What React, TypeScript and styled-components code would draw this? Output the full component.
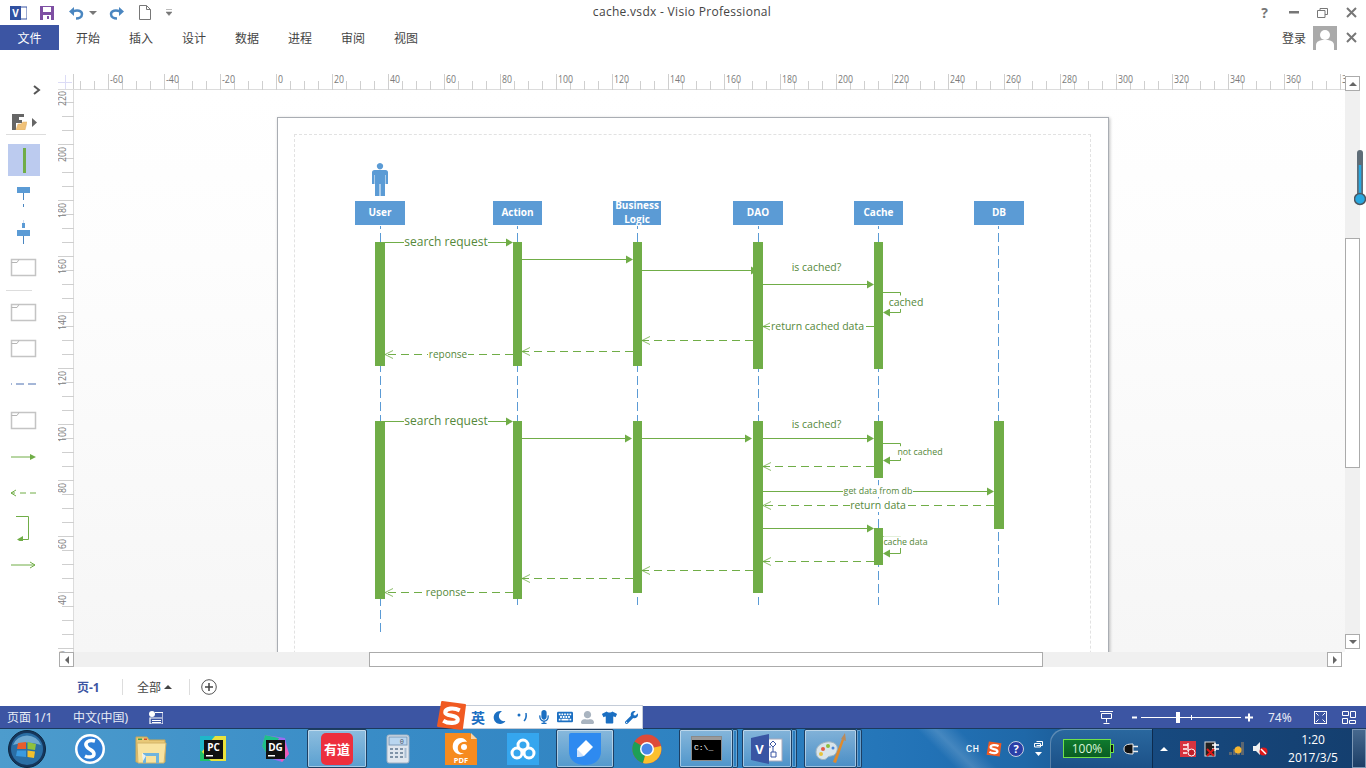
import { Fragment } from "react";
import styled, { createGlobalStyle } from "styled-components";
import { FaKeyboard, FaMicrophone, FaMoon, FaTshirt, FaUserAlt, FaWrench } from "react-icons/fa";

const GlobalStyle = createGlobalStyle`
  html, body { margin: 0; padding: 0; background: #fff; overflow: hidden; }
  * { box-sizing: border-box; }
  body { font-family: "Open Sans", "Noto Sans CJK SC", sans-serif; }
`;

const CJK = `"Noto Sans", "Noto Sans CJK SC", sans-serif`;
const BLUE = "#3c55a3";
const GREEN = "#70ad47";
const TEXT_GREEN = "#55883a";
const HEAD_BLUE = "#5b9bd5";

const Screen = styled.div`
  position: relative;
  width: 1366px;
  height: 768px;
  overflow: hidden;
  display: flex;
  flex-direction: column;
  background: #fff;
`;

/* ---------- title bar and ribbon ---------- */
const TitleBar = styled.div`
  height: 25px;
  display: grid;
  grid-template-columns: 1fr auto 1fr;
  align-items: center;
`;
const QuickAccess = styled.div`
  display: flex;
  align-items: center;
  padding-left: 10px;
`;
const QatSlot = styled.span<{ $w: number }>`
  width: ${(p) => p.$w}px;
  height: 20px;
  display: flex;
  align-items: center;
`;
const Title = styled.div`
  font-size: 12px;
  color: #444;
  letter-spacing: 0.3px;
  padding-right: 2px;
  padding-bottom: 2px;
`;
const WindowControls = styled.div`
  display: flex;
  justify-content: flex-end;
  align-items: center;
`;
const ControlSlot = styled.span`
  width: 29px;
  height: 20px;
  display: flex;
  justify-content: center;
  align-items: center;
  color: #777;
  font: 700 14px "Open Sans", sans-serif;
`;
const RibbonTabs = styled.div`
  height: 25px;
  display: flex;
  align-items: center;
`;
const FileTab = styled.div`
  width: 59px;
  height: 25px;
  background: ${BLUE};
  color: #fff;
  font: 12px ${CJK};
  display: flex;
  align-items: center;
  justify-content: center;
`;
const TabList = styled.div`
  display: flex;
  gap: 29px;
  margin-left: 17px;
`;
const Tab = styled.span`
  font: 12px ${CJK};
  color: #444;
`;
const Account = styled.div`
  margin-left: auto;
  display: flex;
  align-items: center;
`;
const LoginText = styled.span`
  font: 12px ${CJK};
  color: #444;
  margin-right: 7px;
`;
const Avatar = styled.div`
  width: 24px;
  height: 24px;
  background: #aaa;
  overflow: hidden;
`;
const RibbonGap = styled.div`
  height: 22px;
`;

/* ---------- workspace ---------- */
const Workspace = styled.div`
  height: 595px;
  display: flex;
`;
const Stencil = styled.div`
  width: 58px;
  display: flex;
  flex-direction: column;
`;
const StencilRow = styled.div<{ $h?: number }>`
  height: ${(p) => p.$h ?? 36}px;
  width: 47px;
  flex: none;
  display: flex;
  align-items: center;
  justify-content: center;
`;
const StencilToggle = styled.div`
  height: 36px;
  width: 41px;
  flex: none;
  display: flex;
  align-items: center;
  justify-content: flex-end;
`;
const StencilHeader = styled.div`
  height: 27px;
  width: 40px;
  flex: none;
  margin-left: 6px;
  margin-bottom: 9px;
  border-bottom: 1px solid #ddd;
  display: flex;
  align-items: center;
  gap: 5px;
  padding-left: 6px;
  padding-top: 2px;
`;
const SelectedTile = styled.div`
  width: 32px;
  height: 32px;
  flex: none;
  background: #bccbef;
  display: flex;
  align-items: center;
  justify-content: center;
  margin-left: 8px;
`;
const StencilDivider = styled.div`
  width: 26px;
  height: 1px;
  flex: none;
  margin-left: 6px;
  background: #ddd;
`;
const DrawingArea = styled.div`
  flex: 1;
  display: grid;
  grid-template-columns: 16px 1271px 15px 6px;
  grid-template-rows: 18px 562px 15px;
`;
const TopRuler = styled.svg`
  grid-column: 1 / 3;
  grid-row: 1;
  display: block;
`;
const SideRuler = styled.svg`
  grid-column: 1;
  grid-row: 2;
  display: block;
`;
const Canvas = styled.div`
  grid-column: 2;
  grid-row: 2;
  overflow: hidden;
  padding: 27px 0 0 203px;
  background: linear-gradient(#ffffff 0%, #fdfdfd 30%, #f6f6f6 100%);
`;
const Page = styled.div`
  width: 832px;
  height: 640px;
  background: #fff;
  border: 1px solid #a9adb3;
  box-shadow: 1px 1px 3px rgba(0, 0, 0, 0.25);
  padding: 16px;
`;
const PageMargin = styled.div`
  width: 797px;
  height: 610px;
  border: 1px dashed #e2e2e2;
`;
const Diagram = styled.svg`
  display: block;
  font-family: "Open Sans", sans-serif;
`;
const VScroll = styled.div`
  grid-column: 3;
  grid-row: 1 / 3;
  margin-top: 4px;
  margin-bottom: 3px;
  background: #f0f0f0;
  display: flex;
  flex-direction: column;
`;
const ScrollButton = styled.div`
  width: 15px;
  height: 15px;
  flex: none;
  background: #fff;
  border: 1px solid #ababab;
  display: flex;
  align-items: center;
  justify-content: center;
`;
const VThumb = styled.div`
  width: 15px;
  height: 230px;
  margin-top: 147px;
  margin-bottom: auto;
  background: #fff;
  border: 1px solid #ababab;
`;
const HScroll = styled.div`
  grid-column: 1 / 3;
  grid-row: 3;
  margin-left: 1px;
  width: 1283px;
  background: #f0f0f0;
  display: flex;
`;
const HThumb = styled.div`
  width: 674px;
  height: 15px;
  margin-left: 295px;
  margin-right: auto;
  background: #fff;
  border: 1px solid #ababab;
`;
const Thermometer = styled.svg`
  position: absolute;
  left: 1354px;
  top: 149px;
`;

/* ---------- page tabs and status bar ---------- */
const PageTabs = styled.div`
  height: 39px;
  display: flex;
  align-items: center;
  padding-left: 77px;
  padding-top: 1px;
`;
const PageName = styled.span`
  font: 700 12px ${CJK};
  color: ${BLUE};
  width: 45px;
`;
const TabDivider = styled.span`
  width: 1px;
  height: 16px;
  background: #ddd;
`;
const AllPages = styled.span`
  font: 12px ${CJK};
  color: #444;
  margin-left: 14px;
  width: 52px;
  display: flex;
  align-items: center;
  gap: 3px;
`;
const AddPage = styled.span`
  margin-left: 11px;
  display: flex;
`;
const StatusBar = styled.div`
  height: 22px;
  background: ${BLUE};
  color: #e8ecf6;
  display: flex;
  align-items: center;
  padding-left: 7px;
  font: 12px ${CJK};
`;
const StatusItem = styled.span<{ $w: number }>`
  width: ${(p) => p.$w}px;
  display: flex;
  align-items: center;
  white-space: nowrap;
`;
const StatusRight = styled.div`
  margin-left: auto;
  display: flex;
  align-items: center;
  padding-right: 6px;
`;
const ImeBar = styled.div`
  position: absolute;
  left: 437px;
  top: 701px;
  display: flex;
  align-items: flex-end;
`;
const ImeStrip = styled.div`
  margin-left: -10px;
  width: 187px;
  height: 24px;
  margin-bottom: 1px;
  background: #fff;
  border: 1px solid #c4ccd8;
  display: flex;
  align-items: center;
  padding-left: 10px;
  color: #1b6fc2;
`;
const ImeSlot = styled.span<{ $muted?: boolean }>`
  width: 22px;
  display: flex;
  justify-content: center;
  color: ${(p) => (p.$muted ? "#a9b4c0" : "#1b6fc2")};
  font: 700 14px ${CJK};
`;
const ImeLogo = styled.svg`
  position: relative;
  z-index: 1;
  flex: none;
`;

/* ---------- taskbar ---------- */
const Taskbar = styled.div`
  height: 40px;
  display: flex;
  align-items: stretch;
  border-top: 1px solid #1c3a5e;
  background:
    linear-gradient(45deg, transparent 68%, rgba(255, 255, 255, 0.16) 69.3%, transparent 71%),
    linear-gradient(90deg, #4d9ccd 0%, #3a8dc7 25%, #2c80c0 55%, #2272b6 68%, #1f68a8 75%, #174a80 84%, #143e6e 100%);
  overflow: hidden;
`;
const StartSlot = styled.div`
  width: 59px;
  flex: none;
  display: flex;
  align-items: center;
  padding-left: 8px;
`;
const TaskSlot = styled.div<{ $w: number; $ml?: number; $active?: boolean }>`
  width: ${(p) => p.$w}px;
  margin-left: ${(p) => p.$ml ?? 0}px;
  flex: none;
  display: flex;
  align-items: center;
  justify-content: center;
  border-radius: 2px;
  ${(p) =>
    p.$active
      ? `border: 1px solid #1d3f63;
         box-shadow: inset 0 0 0 1px rgba(255,255,255,0.45);
         background: linear-gradient(rgba(255,255,255,0.42), rgba(255,255,255,0.16));`
      : ""}
`;
const StackEdge = styled.div`
  width: 5px;
  flex: none;
  border: 1px solid #1d3f63;
  border-left: 0;
  border-radius: 0 2px 2px 0;
  box-shadow: inset 0 0 0 1px rgba(255, 255, 255, 0.3);
`;
const Tray = styled.div`
  margin-left: auto;
  display: flex;
  align-items: center;
  height: 100%;
`;
const LangText = styled.span`
  font: 11px "Liberation Mono", monospace;
  color: #fff;
  width: 27px;
  text-align: right;
  padding-right: 5px;
`;
const TraySlot = styled.span<{ $w: number }>`
  width: ${(p) => p.$w}px;
  display: flex;
  justify-content: center;
  align-items: center;
`;
const BatteryPanel = styled.div`
  width: 103px;
  height: 100%;
  margin-left: 2px;
  border-radius: 14px 0 0 0;
  border-right: 1px solid #0d2b4e;
  background: linear-gradient(#2a689f, #1c5188);
  box-shadow: inset 1px 1px 0 rgba(255, 255, 255, 0.25);
  display: flex;
  align-items: center;
  padding-left: 13px;
`;
const BatteryBar = styled.div`
  width: 48px;
  height: 19px;
  border: 1px solid #6fe24a;
  background: linear-gradient(#0f7a2e, #0a5d22);
  color: #d8f5d8;
  font: 12px "Open Sans", sans-serif;
  display: flex;
  align-items: center;
  justify-content: center;
`;
const BatteryCap = styled.span`
  width: 3px;
  height: 9px;
  background: #111;
  border: 1px solid #6fe24a;
  border-left: 0;
  margin-right: 9px;
`;
const Clock = styled.div`
  width: 68px;
  margin-left: 8px;
  color: #fff;
  font: 12px/18px "Open Sans", sans-serif;
  text-align: center;
`;
const ShowDesktop = styled.div`
  width: 14px;
  height: 100%;
  margin-left: 5px;
  border: 1px solid #7c97b5;
  background: linear-gradient(#46688e, #1c3e66);
`;

/* ---------- rulers ---------- */
function HorizontalRuler() {
  const ticks = [];
  for (let i = 0; i < 92; i++) {
    const x = 80 + i * 14 - 58;
    const major = (i - 2) % 4 === 0;
    ticks.push(<line key={i} x1={x + 0.5} x2={x + 0.5} y1={major ? 2 : 9} y2={18} stroke="#cfcfcf" />);
  }
  const labels = [];
  for (let v = -60; v <= 380; v += 20) {
    const s = String(v);
    labels.push(
      <text
        key={v}
        x={276 + v * 2.8 - 58 + 2}
        y={11}
        fontSize="11"
        fill="#7b7b7b"
        fontFamily="Open Sans, sans-serif"
        textLength={s.length * 5 - (v < 0 ? 2 : 0)}
        lengthAdjust="spacingAndGlyphs"
      >
        {s}
      </text>
    );
  }
  return (
    <TopRuler width={1287} height={18} viewBox="0 0 1287 18">
      <line x1="15.5" x2="15.5" y1="2" y2="18" stroke="#cfcfcf" />
      <line x1="0" x2="1287" y1="17.5" y2="17.5" stroke="#dcdcdc" />
      <path d="M0 10.5H14M7.5 3V17" stroke="#dcdcf6" />
      {ticks}
      {labels}
    </TopRuler>
  );
}

function VerticalRuler() {
  const ticks = [];
  for (let i = 0; i < 40; i++) {
    const y = 13 + i * 14;
    const major = (i - 3) % 4 === 0;
    ticks.push(<line key={i} x1={major ? 0 : 4} x2={16} y1={y - 0.5} y2={y - 0.5} stroke="#cfcfcf" />);
  }
  const labels = [];
  for (let v = 220; v >= 20; v -= 20) {
    const y = ((220 - v) / 20) * 56 - 1;
    labels.push(
      <text
        key={v}
        fontSize="11"
        fill="#7b7b7b"
        fontFamily="Open Sans, sans-serif"
        textAnchor="end"
        textLength={String(v).length * 5}
        lengthAdjust="spacingAndGlyphs"
        transform={`translate(8 ${y + 2}) rotate(-90)`}
      >
        {v}
      </text>
    );
  }
  return (
    <SideRuler width={16} height={562} viewBox="0 0 16 562">
      <line x1="15.5" x2="15.5" y1="0" y2="562" stroke="#dcdcdc" />
      {ticks}
      {labels}
    </SideRuler>
  );
}

/* ---------- sequence diagram ---------- */
interface IHead {
  x: number;
  w: number;
  lines: string[];
}
const heads: IHead[] = [
  { x: 355, w: 50, lines: ["User"] },
  { x: 493, w: 49, lines: ["Action"] },
  { x: 613, w: 48, lines: ["Business", "Logic"] },
  { x: 733, w: 50, lines: ["DAO"] },
  { x: 854, w: 49, lines: ["Cache"] },
  { x: 974, w: 50, lines: ["DB"] },
];
const lifelines = [
  [380.5, 635],
  [517.5, 605],
  [637.5, 605],
  [758.5, 605],
  [878.5, 605],
  [998.5, 605],
];
// x, y, width, height
const bars = [
  [375, 242, 10, 124],
  [513, 242, 9, 124],
  [633, 242, 9, 124],
  [753, 242, 10, 127],
  [874, 242, 9, 127],
  [375, 421, 10, 178],
  [513, 421, 9, 178],
  [633, 421, 9, 172],
  [753, 421, 10, 172],
  [874, 421, 9, 57],
  [874, 528, 9, 37],
  [994, 421, 10, 108],
];
// y, from, to, dashed
const messages: [number, number, number, boolean][] = [
  [242, 385, 513, false],
  [259, 522, 633, false],
  [270, 642, 758, false],
  [284, 763, 874, false],
  [326, 874, 763, true],
  [340, 753, 642, true],
  [351, 633, 522, true],
  [354, 513, 385, true],
  [421, 385, 513, false],
  [438, 522, 632, false],
  [438, 642, 752, false],
  [438, 763, 874, false],
  [466, 874, 763, true],
  [491, 763, 994, false],
  [505, 994, 763, true],
  [528, 758, 874, false],
  [561, 874, 763, true],
  [570, 753, 642, true],
  [578, 633, 522, true],
  [592, 513, 385, true],
];
// top, bottom of the self calls on the cache lifeline
const selfCalls = [
  [292, 312],
  [443, 460],
  [536, 553],
];
// text, centre x, baseline y, font size, width of the white backing (0 for none)
const labels: [string, number, number, number, number][] = [
  ["search request", 446, 246, 12, 84],
  ["reponse", 448, 358, 10, 40],
  ["is cached?", 816.5, 271, 10.5, 0],
  ["cached", 906, 306, 10.5, 37],
  ["return cached data", 817.5, 330, 10.5, 95],
  ["search request", 446, 425, 12, 84],
  ["reponse", 446, 596, 10.5, 42],
  ["is cached?", 816.5, 428, 10.5, 0],
  ["not cached", 920, 455, 8.8, 46],
  ["get data from db", 878, 494, 8.8, 70],
  ["return data", 878, 509, 10.5, 56],
  ["cache data", 905.5, 545, 8.8, 44],
];

function Arrow({ y, from, to, dashed }: { y: number; from: number; to: number; dashed: boolean }) {
  const dir = to > from ? 1 : -1;
  const yy = y + 0.5;
  return (
    <g>
      <line x1={from} x2={to - dir * (dashed ? 0 : 5)} y1={yy} y2={yy} stroke={GREEN} strokeDasharray={dashed ? "8 5" : undefined} />
      {dashed ? (
        <path d={`M${to - dir * 8} ${yy - 4}L${to} ${yy}L${to - dir * 8} ${yy + 4}`} fill="none" stroke={GREEN} strokeOpacity="0.8" />
      ) : (
        <path d={`M${to} ${yy}L${to - dir * 7} ${yy - 4}V${yy + 4}Z`} fill={GREEN} />
      )}
    </g>
  );
}

function SequenceDiagram() {
  return (
    <Diagram width={795} height={608} viewBox="295 135 795 608">
      <path
        d="M380 163a3.2 3.2 0 1 1-.01 0ZM374.500 170h11a2.500 2.500 0 0 1 2.500 2.500V184h-2.500v-9h-.5v21h-4.500v-12h-1v12H375v-21h-.5v9H372v-11.500a2.500 2.500 0 0 1 2.500-2.500Z"
        fill={HEAD_BLUE}
      />
      {lifelines.map(([x, end]) => (
        <line key={x} x1={x} x2={x} y1={226} y2={end} stroke={HEAD_BLUE} strokeDasharray="9 4" strokeDashoffset={6} />
      ))}
      {heads.map((h) => (
        <g key={h.x}>
          <rect x={h.x} y={201} width={h.w} height={24} fill={HEAD_BLUE} />
          {h.lines.map((t, i) => (
            <text
              key={t}
              x={h.x + h.w / 2}
              y={h.lines.length === 1 ? 216 : 209 + i * 14}
              textAnchor="middle"
              fontSize="10"
              fontWeight="700"
              fill="#fff"
            >
              {t}
            </text>
          ))}
        </g>
      ))}
      {bars.map(([x, y, w, h], i) => (
        <rect key={i} x={x} y={y} width={w} height={h} fill={GREEN} />
      ))}
      {messages.map(([y, from, to, dashed], i) => (
        <Arrow key={i} y={y} from={from} to={to} dashed={dashed} />
      ))}
      {selfCalls.map(([top, bottom]) => (
        <g key={top}>
          <path d={`M883 ${top + 0.5}H900.500V${bottom + 0.5}H889`} fill="none" stroke={GREEN} />
          <path d={`M883 ${bottom + 0.5}L890 ${bottom - 3.5}V${bottom + 4.5}Z`} fill={GREEN} />
        </g>
      ))}
      {labels.map(([t, x, y, size, back], i) => (
        <g key={i}>
          {back > 0 && <rect x={x - back / 2} y={y - size} width={back} height={size + 3} fill="#fff" />}
          <text x={x} y={y} textAnchor="middle" fontSize={size} fill={TEXT_GREEN}>
            {t}
          </text>
        </g>
      ))}
    </Diagram>
  );
}

/* ---------- small drawings ---------- */
const FrameIcon = () => (
  <svg width="27" height="19" viewBox="0 0 27 19">
    <path d="M1.500 1.500H25.500V17.500H1.500Z" fill="#fff" stroke="#c4c4c4" strokeWidth="1.500" />
    <path d="M1.500 4.500H7L9 1.500" fill="none" stroke="#b5b5b5" />
  </svg>
);
const Tri = ({ dir, color = "#777" }: { dir: "u" | "d" | "l" | "r"; color?: string }) => {
  const d = { u: "M0 6L4 2L8 6Z", d: "M0 2H8L4 6Z", l: "M6 0V8L2 4Z", r: "M2 0V8L6 4Z" }[dir];
  return (
    <svg width="8" height="8" viewBox="0 0 8 8">
      <path d={d} fill={color} />
    </svg>
  );
};

function TaskIcon({ name }: { name: string }) {
  switch (name) {
    case "sogou":
      return (
        <svg width="30" height="30" viewBox="0 0 30 30">
          <circle cx="15" cy="15" r="15" fill="#fff" />
          <circle cx="15" cy="15" r="12.500" fill="#2f7fd6" />
          <path d="M20 7C13 5 9 9 12 13C14 16 19 16 19 20C19 23 14 24 10 22" fill="none" stroke="#fff" strokeWidth="3.500" />
        </svg>
      );
    case "folder":
      return (
        <svg width="32" height="30" viewBox="0 0 32 30">
          <path d="M1 3H12L14 6H30V28H1Z" fill="#e8c877" stroke="#c9a654" />
          <path d="M3 4.500H7V6H3Z" fill="#3da24a" />
          <path d="M9 4.500H12V6H9Z" fill="#d9472b" />
          <path d="M2 9H31L29 29H3Z" fill="#f8e3a0" stroke="#d3b469" />
          <path d="M8 24V19H24V29H21V22H11V29H8Z" fill="#6fb4de" />
          <path d="M7 19L11 22L8 27Z" fill="#fff" opacity="0.8" />
        </svg>
      );
    case "pc":
    case "dg":
      return (
        <svg width="28" height="30" viewBox="0 0 28 30">
          {name === "pc" ? (
            <>
              <path d="M1 2H27V27H1Z" fill="#e9e23d" />
              <path d="M1 2H16L1 20Z" fill="#1fb7c9" />
              <path d="M1 16L12 27H1Z" fill="#22c36b" />
            </>
          ) : (
            <>
              <path d="M4 1L24 4L28 20L21 28L8 24L1 12Z" fill="#9a6cf0" />
              <path d="M4 1L18 4L8 24L1 12Z" fill="#1fc08a" />
              <path d="M24 8L28 20L21 28L16 20Z" fill="#ed5cb7" />
            </>
          )}
          <rect x={5} y={6} width={19} height={19} fill="#111" />
          <text x={14.500} y={17} textAnchor="middle" fontSize="10" fontWeight="700" fill="#fff" fontFamily="Open Sans, sans-serif">
            {name.toUpperCase()}
          </text>
          <rect x={7} y={21} width={7} height={1.500} fill="#fff" />
        </svg>
      );
    case "youdao":
      return (
        <svg width="32" height="32" viewBox="0 0 32 32">
          <rect width="32" height="32" rx="5" fill="#ed2f3d" />
          <text x="16" y="21" textAnchor="middle" fontSize="13" fontWeight="700" fill="#fff" fontFamily="Noto Sans CJK SC, sans-serif">
            有道
          </text>
        </svg>
      );
    case "calc":
      return (
        <svg width="24" height="30" viewBox="0 0 24 30">
          <rect x="1" y="1" width="22" height="28" rx="2" fill="#dfe6ee" stroke="#9fb0c2" />
          <rect x="3" y="3" width="18" height="8" fill="#b9d6f0" stroke="#7d9ab8" />
          <text x="18" y="10" textAnchor="end" fontSize="7" fill="#556" fontFamily="Liberation Mono, monospace">
            0
          </text>
          <path d="M4 14h3v2h-3zM9 14h3v2h-3zM14 14h3v2h-3zM4 18h3v2h-3zM9 18h3v2h-3zM14 18h3v2h-3zM4 22h3v2h-3zM9 22h3v2h-3zM14 22h3v2h-3z" fill="#7f93a8" />
          <path d="M18.500 14h2v10h-2z" fill="#a8bdd2" />
        </svg>
      );
    case "pdf":
      return (
        <svg width="32" height="32" viewBox="0 0 32 32">
          <path d="M0 0H25L32 6V32H0Z" fill="#f68b1f" />
          <path d="M26 0L32 6H26Z" fill="#fbd3a4" />
          <path d="M16 5C9 5 7 11 8 16C10 21 15 23 19 20C15 21 12 18 13 13C14 10 18 8 22 9C21 7 19 5 16 5Z" fill="#fff" />
          <circle cx="19" cy="14" r="3" fill="#fff" />
          <text x="16" y="30" textAnchor="middle" fontSize="7.500" fontWeight="700" fill="#fff" fontFamily="Open Sans, sans-serif">
            PDF
          </text>
        </svg>
      );
    case "baidu":
      return (
        <svg width="32" height="32" viewBox="0 0 32 32">
          <rect width="32" height="32" fill="#35a6ee" />
          <g fill="none" stroke="#fff" strokeWidth="3">
            <circle cx="16" cy="12" r="5" />
            <circle cx="10" cy="20" r="5" />
            <circle cx="22" cy="20" r="5" />
          </g>
        </svg>
      );
    case "note":
      return (
        <svg width="32" height="32" viewBox="0 0 32 32">
          <path d="M2 0H32V18C32 27 26 32 16 32C6 32 0 27 0 18V2Q0 0 2 0Z" fill="#2e8af0" />
          <path d="M8 24V16L17 7L24 14L15 23Z" fill="#fff" />
          <path d="M8 24V16L15 23Z" fill="#cfe2fb" />
        </svg>
      );
    case "chrome":
      return (
        <svg width="30" height="30" viewBox="0 0 30 30">
          <circle cx="15" cy="15" r="14.500" fill="#dd4b39" />
          <path d="M15 15L2.500 7.500A14.500 14.500 0 0 0 11 29Z" fill="#1d9f57" />
          <path d="M15 15L29 12A14.500 14.500 0 0 1 11 29Z" fill="#fbc02d" />
          <circle cx="15" cy="15" r="7" fill="#fff" />
          <circle cx="15" cy="15" r="5.500" fill="#4a86e8" />
        </svg>
      );
    case "cmd":
      return (
        <svg width="31" height="25" viewBox="0 0 31 25">
          <rect x="0.500" y="0.500" width="30" height="24" fill="#000" stroke="#8a8a8a" />
          <rect x="1" y="1" width="29" height="3" fill="#9a9a9a" />
          <text x="3" y="14" fontSize="8" fill="#fff" fontFamily="Liberation Mono, monospace">
            C:\_
          </text>
        </svg>
      );
    case "visio":
      return (
        <svg width="32" height="32" viewBox="0 0 32 32">
          <rect x="14" y="6" width="17" height="22" fill="#fff" stroke="#aab" />
          <path d="M22 8L25 11L22 14L19 11Z M20 19H25V24H20Z M16 14H20M22 14V19" fill="none" stroke="#3955a3" />
          <path d="M0 5L18 1V31L0 27Z" fill="#3955a3" />
          <text x="8.500" y="21" textAnchor="middle" fontSize="13" fontWeight="700" fill="#fff" fontFamily="Open Sans, sans-serif">
            V
          </text>
        </svg>
      );
    case "paint":
      return (
        <svg width="32" height="32" viewBox="0 0 32 32">
          <path d="M1 19C1 12 9 8 16 9C22 10 24 15 21 20C19 24 14 22 12 25C10 28 1 27 1 19Z" fill="#d8e4ea" stroke="#9fb4c0" />
          <circle cx="8" cy="16" r="2" fill="#e25b47" />
          <circle cx="13" cy="13" r="2" fill="#8cbf3f" />
          <circle cx="6" cy="21" r="2" fill="#e7c33c" />
          <circle cx="18" cy="15" r="1.500" fill="#4a86d8" />
          <path d="M18 29L27 6L29 7L21 30Z" fill="#e08a2c" />
          <path d="M26 6L30 0L31 8Z" fill="#b98a5c" />
        </svg>
      );
    default:
      return null;
  }
}

const StartOrb = () => (
  <svg width="38" height="38" viewBox="0 0 38 38">
    <circle cx="19" cy="19" r="18.500" fill="#15365c" stroke="#0d2740" />
    <circle cx="19" cy="19" r="16" fill="#2a6ea5" />
    <path d="M5 15A15 15 0 0 1 33 15Q19 10 5 15Z" fill="#8dc0e2" opacity="0.7" />
    <path d="M10 13L18 12V19L9 19Z" fill="#e85c2c" />
    <path d="M19.500 12L28 14L27 20L19.500 19Z" fill="#8fc13e" />
    <path d="M9 20.500L18 20.500V27L8 26Z" fill="#3a9ae0" />
    <path d="M19.500 20.500L27 21.500L26 28L19.500 27Z" fill="#f3c02d" />
  </svg>
);

const SogouMark = ({ size }: { size: number }) => (
  <ImeLogo width={size} height={size} viewBox="0 0 28 28">
    <path d="M5 1L27 4L24 27L1 24Z" fill="#f05a22" stroke="#f05a22" strokeLinejoin="round" strokeWidth="2" />
    <path d="M22 9C16 6 8 7 8 11C8 15 20 13 20 18C20 22 11 22 6 19" fill="none" stroke="#fff" strokeWidth="4" />
  </ImeLogo>
);

const taskItems: { name: string; w: number; ml?: number; active?: boolean; stack?: boolean }[] = [
  { name: "sogou", w: 61 },
  { name: "folder", w: 62 },
  { name: "pc", w: 62 },
  { name: "dg", w: 62 },
  { name: "youdao", w: 60, ml: 1, active: true },
  { name: "calc", w: 62 },
  { name: "pdf", w: 64 },
  { name: "baidu", w: 60 },
  { name: "note", w: 58, ml: 3, active: true },
  { name: "chrome", w: 65 },
  { name: "cmd", w: 54, active: true, stack: true },
  { name: "visio", w: 50, ml: 4, active: true, stack: true },
  { name: "paint", w: 53, ml: 7, active: true, stack: true },
];

export default function App() {
  return (
    <Screen>
      <GlobalStyle />
      <TitleBar>
        <QuickAccess>
          <QatSlot $w={30}>
            <svg width="17" height="16" viewBox="0 0 17 16">
              <rect x="9" y="2" width="8" height="12" fill="#fff" stroke="#3955a3" />
              <path d="M0 1H11V15H0Z" fill="#3050a0" />
              <text x="5.500" y="12" textAnchor="middle" fontSize="10" fontWeight="700" fill="#fff" fontFamily="Open Sans, sans-serif">
                V
              </text>
            </svg>
          </QatSlot>
          <QatSlot $w={29}>
            <svg width="14" height="14" viewBox="0 0 14 14">
              <path d="M0 0H14V14H0Z" fill="#7e4fa3" />
              <path d="M3 1H11V6H3Z" fill="#fff" />
              <path d="M3 9H11V14H3Z" fill="#fff" />
              <path d="M7 10H9V13H7Z" fill="#7e4fa3" />
            </svg>
          </QatSlot>
          <QatSlot $w={20}>
            <svg width="15" height="14" viewBox="0 0 15 14">
              <path d="M0 5.500L5 1V10Z" fill="#4a86c0" />
              <path d="M4 5.500C8 3.500 13 4.500 13 8C13 11 10 12.500 7 12.500" fill="none" stroke="#4a86c0" strokeWidth="2.500" />
            </svg>
          </QatSlot>
          <QatSlot $w={20}>
            <Tri dir="d" />
          </QatSlot>
          <QatSlot $w={30}>
            <svg width="15" height="14" viewBox="0 0 15 14">
              <path d="M15 5.500L10 1V10Z" fill="#4a86c0" />
              <path d="M11 5.500C7 3.500 2 4.500 2 8C2 11 5 12.500 8 12.500" fill="none" stroke="#4a86c0" strokeWidth="2.500" />
            </svg>
          </QatSlot>
          <QatSlot $w={27}>
            <svg width="12" height="15" viewBox="0 0 12 15">
              <path d="M0.500 0.500H7.500L11.500 4.500V14.500H0.500Z M7.500 0.500V4.500H11.500" fill="#fff" stroke="#777" />
            </svg>
          </QatSlot>
          <QatSlot $w={10}>
            <svg width="6" height="7" viewBox="0 0 6 7">
              <path d="M0 0.500H6M0 3H6L3 6.500Z" fill="#777" stroke="#777" strokeWidth="0.500" />
            </svg>
          </QatSlot>
        </QuickAccess>
        <Title>cache.vsdx - Visio Professional</Title>
        <WindowControls>
          <ControlSlot>?</ControlSlot>
          <ControlSlot>
            <svg width="10" height="3" viewBox="0 0 10 3">
              <rect width="10" height="2.500" fill="#777" />
            </svg>
          </ControlSlot>
          <ControlSlot>
            <svg width="11" height="10" viewBox="0 0 11 10">
              <path d="M3 2.500V0.500H10.500V6.500H8M0.500 2.500H8V9.500H0.500Z" fill="none" stroke="#777" />
            </svg>
          </ControlSlot>
          <ControlSlot>
            <svg width="11" height="11" viewBox="0 0 11 11">
              <path d="M1 1L10 10M10 1L1 10" stroke="#777" strokeWidth="2" />
            </svg>
          </ControlSlot>
        </WindowControls>
      </TitleBar>
      <RibbonTabs>
        <FileTab>文件</FileTab>
        <TabList>
          {["开始", "插入", "设计", "数据", "进程", "审阅", "视图"].map((t) => (
            <Tab key={t}>{t}</Tab>
          ))}
        </TabList>
        <Account>
          <LoginText>登录</LoginText>
          <Avatar>
            <svg width="24" height="24" viewBox="0 0 24 24">
              <circle cx="12" cy="9" r="5" fill="#fff" />
              <path d="M3 24V19Q3 15 9 14H15Q21 15 21 19V24Z" fill="#fff" />
            </svg>
          </Avatar>
          <ControlSlot>
            <svg width="11" height="11" viewBox="0 0 11 11">
              <path d="M1 1L10 10M10 1L1 10" stroke="#777" strokeWidth="2" />
            </svg>
          </ControlSlot>
        </Account>
      </RibbonTabs>
      <RibbonGap />
      <Workspace>
        <Stencil>
          <StencilToggle>
            <svg width="8" height="10" viewBox="0 0 8 10">
              <path d="M1 1L6 5L1 9" fill="none" stroke="#555" strokeWidth="2" />
            </svg>
          </StencilToggle>
          <StencilHeader>
            <svg width="15" height="16" viewBox="0 0 15 16">
              <path d="M0 0H12V3H7V6H10V9H4V16H0Z" fill="#666" />
              <path d="M4 16L6 10H9L11 8H15L13 16Z" fill="#f0c27a" stroke="#e0ad62" strokeWidth="0.500" />
            </svg>
            <svg width="5" height="9" viewBox="0 0 5 9">
              <path d="M0 0L5 4.500L0 9Z" fill="#666" />
            </svg>
          </StencilHeader>
          <SelectedTile>
            <svg width="3" height="25" viewBox="0 0 3 25">
              <rect width="3" height="25" fill={GREEN} />
            </svg>
          </SelectedTile>
          <StencilRow $h={44}>
            <svg width="14" height="22" viewBox="0 0 14 22">
              <rect width="13" height="6" fill={HEAD_BLUE} />
              <path d="M6.500 6V13M6.500 17V20" stroke="#4a86c0" />
            </svg>
          </StencilRow>
          <StencilRow $h={24}>
            <svg width="14" height="24" viewBox="0 0 14 24">
              <path d="M6.500 0V3" stroke="#cbdcf0" />
              <rect x="5" y="3" width="3" height="5" fill={HEAD_BLUE} />
              <rect y="10" width="13" height="6" fill={HEAD_BLUE} />
              <path d="M6.500 16V24" stroke="#4a86c0" />
            </svg>
          </StencilRow>
          <StencilRow $h={46}>
            <FrameIcon />
          </StencilRow>
          <StencilDivider />
          <StencilRow $h={43}>
            <FrameIcon />
          </StencilRow>
          <StencilRow $h={29}>
            <FrameIcon />
          </StencilRow>
          <StencilRow $h={41}>
            <svg width="27" height="6" viewBox="0 0 27 6">
              <path d="M1 3H2M6 3H14M18 3H26" stroke="#4a6fb0" />
            </svg>
          </StencilRow>
          <StencilRow $h={33}>
            <FrameIcon />
          </StencilRow>
          <StencilRow $h={39}>
            <svg width="27" height="8" viewBox="0 0 27 8">
              <path d="M1 4H21" stroke={GREEN} />
              <path d="M26 4L20 1V7Z" fill={GREEN} />
            </svg>
          </StencilRow>
          <StencilRow $h={33}>
            <svg width="27" height="8" viewBox="0 0 27 8">
              <path d="M6 1L1 4L6 7" fill="none" stroke={GREEN} />
              <path d="M1 4H5M10 4H16M20 4H26" stroke={GREEN} />
            </svg>
          </StencilRow>
          <StencilRow $h={37}>
            <svg width="16" height="26" viewBox="0 0 16 26">
              <path d="M0 1.500H12.500V24.500H6" fill="none" stroke={GREEN} />
              <path d="M1 24.500L7 21V28Z" fill={GREEN} />
            </svg>
          </StencilRow>
          <StencilRow $h={37}>
            <svg width="27" height="8" viewBox="0 0 27 8">
              <path d="M1 4H25" stroke={GREEN} />
              <path d="M20 1L25 4L20 7" fill="none" stroke={GREEN} />
            </svg>
          </StencilRow>
        </Stencil>
        <DrawingArea>
          <HorizontalRuler />
          <VerticalRuler />
          <Canvas>
            <Page>
              <PageMargin>
                <SequenceDiagram />
              </PageMargin>
            </Page>
          </Canvas>
          <VScroll>
            <ScrollButton>
              <Tri dir="u" color="#666" />
            </ScrollButton>
            <VThumb />
            <ScrollButton>
              <Tri dir="d" color="#666" />
            </ScrollButton>
          </VScroll>
          <HScroll>
            <ScrollButton>
              <Tri dir="l" color="#666" />
            </ScrollButton>
            <HThumb />
            <ScrollButton>
              <Tri dir="r" color="#666" />
            </ScrollButton>
          </HScroll>
        </DrawingArea>
      </Workspace>
      <Thermometer width="12" height="58" viewBox="0 0 12 58">
        <rect x="3" y="1" width="6" height="48" rx="3" fill="#5f6d78" />
        <rect x="4.750" y="16" width="2.500" height="34" fill="#29a8e0" />
        <circle cx="6" cy="50" r="5.500" fill="#29a8e0" stroke="#4c5963" strokeWidth="1.500" />
      </Thermometer>
      <PageTabs>
        <PageName>页-1</PageName>
        <TabDivider />
        <AllPages>
          全部
          <Tri dir="u" color="#444" />
        </AllPages>
        <TabDivider />
        <AddPage>
          <svg width="16" height="16" viewBox="0 0 16 16">
            <circle cx="8" cy="8" r="7.300" fill="none" stroke="#555" />
            <path d="M4 8H12M8 4V12" stroke="#444" strokeWidth="1.500" />
          </svg>
        </AddPage>
      </PageTabs>
      <StatusBar>
        <StatusItem $w={66}>页面 1/1</StatusItem>
        <StatusItem $w={76}>中文(中国)</StatusItem>
        <StatusItem $w={20}>
          <svg width="14" height="13" viewBox="0 0 14 13">
            <circle cx="3" cy="3" r="3" fill="#fff" />
            <path d="M6 1.500H14V13H1V7H13M3 9.500H12M3 11.500H12" fill="none" stroke="#fff" strokeWidth="1.200" />
          </svg>
        </StatusItem>
        <StatusRight>
          <StatusItem $w={32}>
            <svg width="13" height="13" viewBox="0 0 13 13">
              <path d="M0 0.500H13M1.500 2.500H11.500V7.500H1.500ZM6.500 7.500V11.500M3.500 12.500H9.500" fill="none" stroke="#fff" />
            </svg>
          </StatusItem>
          <StatusItem $w={136}>
            <svg width="122" height="11" viewBox="0 0 122 11">
              <path d="M0 5.500H5" stroke="#fff" strokeWidth="2" />
              <path d="M9 5.500H109M59.500 3V8" stroke="#fff" />
              <rect x="44" y="0" width="4" height="11" fill="#fff" />
              <path d="M113 5.500H121M117 1.500V9.500" stroke="#fff" strokeWidth="2" />
            </svg>
          </StatusItem>
          <StatusItem $w={46}>74%</StatusItem>
          <StatusItem $w={28}>
            <svg width="13" height="13" viewBox="0 0 13 13">
              <rect x="0.500" y="0.500" width="12" height="12" fill="none" stroke="#fff" />
              <path d="M2 2L4.500 4.500M11 2L8.500 4.500M2 11L4.500 8.500M11 11L8.500 8.500" stroke="#fff" />
            </svg>
          </StatusItem>
          <StatusItem $w={18}>
            <svg width="14" height="13" viewBox="0 0 14 13">
              <path d="M0.500 0.500H6.500V4.500H0.500ZM8.500 0.500H13.500V6.500H8.500ZM0.500 7.500H5.500V12.500H0.500ZM7.500 9.500H13.500V12.500H7.500Z" fill="none" stroke="#fff" />
            </svg>
          </StatusItem>
        </StatusRight>
      </StatusBar>
      <Taskbar>
        <StartSlot>
          <StartOrb />
        </StartSlot>
        {taskItems.map((t) => (
          <Fragment key={t.name}>
            <TaskSlot $w={t.w} $ml={t.ml} $active={t.active}>
              <TaskIcon name={t.name} />
            </TaskSlot>
            {t.stack && <StackEdge />}
          </Fragment>
        ))}
        <Tray>
          <LangText>CH</LangText>
          <TraySlot $w={20}>
            <svg width="16" height="16" viewBox="0 0 28 28">
              <path d="M5 1L27 4L24 27L1 24Z" fill="#f05a22" />
              <path d="M22 9C16 6 8 7 8 11C8 15 20 13 20 18C20 22 11 22 6 19" fill="none" stroke="#fff" strokeWidth="4" />
            </svg>
          </TraySlot>
          <TraySlot $w={24}>
            <svg width="16" height="16" viewBox="0 0 16 16">
              <circle cx="8" cy="8" r="7.500" fill="#2a3fa8" stroke="#c8d0e0" />
              <text x="8" y="12" textAnchor="middle" fontSize="11" fontWeight="700" fill="#fff" fontFamily="Open Sans, sans-serif">
                ?
              </text>
            </svg>
          </TraySlot>
          <TraySlot $w={20}>
            <svg width="9" height="17" viewBox="0 0 9 17">
              <path d="M2.500 1.500H8.500V5.500H2.500M0.500 3.500H6.500V7H0.500Z" fill="none" stroke="#fff" />
              <path d="M1 12H8L4.500 16Z" fill="#fff" />
            </svg>
          </TraySlot>
          <BatteryPanel>
            <BatteryBar>100%</BatteryBar>
            <BatteryCap />
            <svg width="16" height="12" viewBox="0 0 16 12">
              <path d="M1 6C1 2 4 1 10 1V11C4 11 1 10 1 6Z" fill="#111" stroke="#eee" />
              <path d="M10 3.500H15M10 8.500H15" stroke="#eee" strokeWidth="1.500" />
            </svg>
          </BatteryPanel>
          <TraySlot $w={22}>
            <Tri dir="u" color="#fff" />
          </TraySlot>
          <TraySlot $w={26}>
            <svg width="16" height="16" viewBox="0 0 16 16">
              <rect width="16" height="16" fill="#d8343f" />
              <path d="M3 4H8M3 8H7M3 12H7M8 2V10" stroke="#fff" strokeWidth="1.300" />
              <circle cx="11.500" cy="11.500" r="3.500" fill="#c01e28" stroke="#fff" />
            </svg>
          </TraySlot>
          <TraySlot $w={22}>
            <svg width="16" height="17" viewBox="0 0 16 17">
              <rect x="1" y="2" width="10" height="14" fill="#222" stroke="#ddd" />
              <path d="M8 5H15M8 9H15M11 3V11" stroke="#fff" strokeWidth="1.500" />
              <path d="M3 9L10 16M10 9L3 16" stroke="#e01818" strokeWidth="2" />
            </svg>
          </TraySlot>
          <TraySlot $w={26}>
            <svg width="17" height="15" viewBox="0 0 17 15">
              <path d="M1 11H4V14H1ZM5 8H8V14H5ZM9 5H12V14H9ZM13 1H16V14H13Z" fill="#5c6670" />
              <circle cx="10" cy="9" r="3.500" fill="#f5b52e" />
            </svg>
          </TraySlot>
          <TraySlot $w={22}>
            <svg width="15" height="15" viewBox="0 0 15 15">
              <path d="M0 5H3L7 1V14L3 10H0Z" fill="#f0f0f0" />
              <circle cx="10.500" cy="10.500" r="4" fill="#e01818" />
              <path d="M8 8L13 13" stroke="#fff" strokeWidth="1.500" />
            </svg>
          </TraySlot>
          <Clock>
            1:20
            <br />
            2017/3/5
          </Clock>
          <ShowDesktop />
        </Tray>
      </Taskbar>
      <ImeBar>
        <SogouMark size={29} />
        <ImeStrip>
          <ImeSlot>英</ImeSlot>
          <ImeSlot>
            <FaMoon size={13} />
          </ImeSlot>
          <ImeSlot>
            <svg width="12" height="10" viewBox="0 0 12 10">
              <circle cx="3" cy="3" r="1.500" fill="#1b6fc2" />
              <path d="M10 1C10.500 4 10 7 8 9" fill="none" stroke="#1b6fc2" strokeWidth="1.500" />
            </svg>
          </ImeSlot>
          <ImeSlot>
            <FaMicrophone size={14} />
          </ImeSlot>
          <ImeSlot>
            <FaKeyboard size={16} />
          </ImeSlot>
          <ImeSlot $muted>
            <FaUserAlt size={13} />
          </ImeSlot>
          <ImeSlot>
            <FaTshirt size={15} />
          </ImeSlot>
          <ImeSlot>
            <FaWrench size={13} />
          </ImeSlot>
        </ImeStrip>
      </ImeBar>
    </Screen>
  );
}
